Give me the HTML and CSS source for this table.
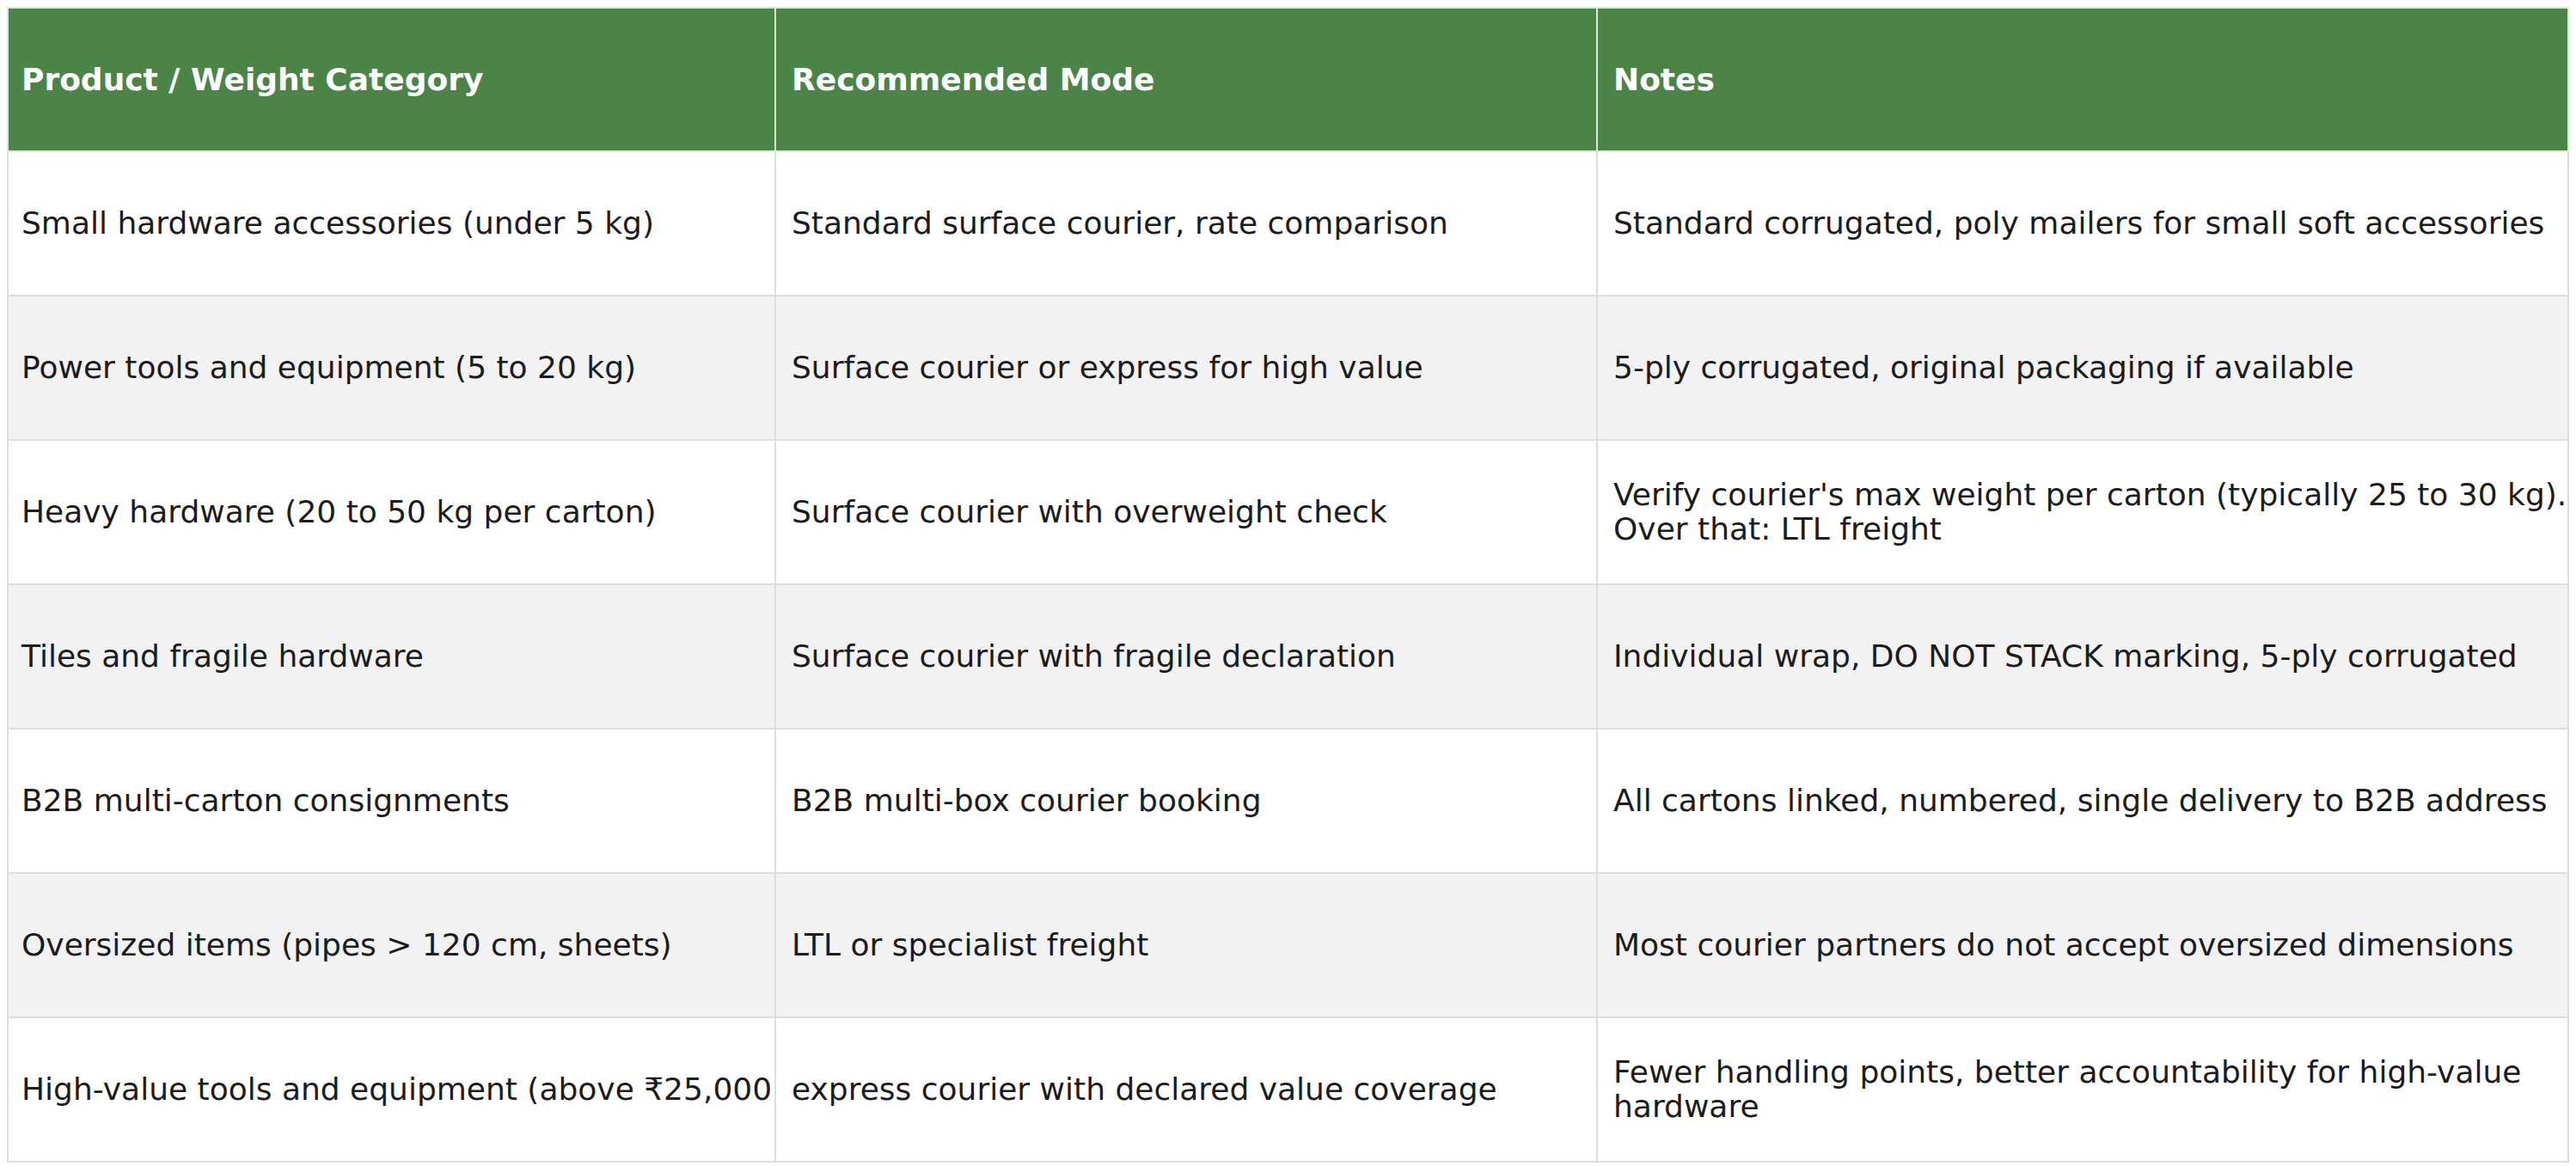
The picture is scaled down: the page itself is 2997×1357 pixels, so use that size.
FILE: index.html
```html
<!DOCTYPE html>
<html lang="en">
<head>
<meta charset="utf-8">
<title>Shipping modes by product category</title>
<link rel="stylesheet" href="styles.css">
</head>
<body>
<table class="modes">
  <colgroup>
    <col class="col-product">
    <col class="col-mode">
    <col class="col-notes">
  </colgroup>
  <thead>
    <tr class="head-row">
      <th>Product / Weight Category</th>
      <th>Recommended Mode</th>
      <th>Notes</th>
    </tr>
  </thead>
  <tbody>
    <tr>
      <td>Small hardware accessories (under 5 kg)</td>
      <td>Standard surface courier, rate comparison</td>
      <td>Standard corrugated, poly mailers for small soft accessories</td>
    </tr>
    <tr>
      <td>Power tools and equipment (5 to 20 kg)</td>
      <td>Surface courier or express for high value</td>
      <td>5-ply corrugated, original packaging if available</td>
    </tr>
    <tr>
      <td>Heavy hardware (20 to 50 kg per carton)</td>
      <td>Surface courier with overweight check</td>
      <td class="nowrap">Verify courier's max weight per carton (typically 25 to 30 kg).<br>Over that: LTL freight</td>
    </tr>
    <tr>
      <td>Tiles and fragile hardware</td>
      <td>Surface courier with fragile declaration</td>
      <td>Individual wrap, DO NOT STACK marking, 5-ply corrugated</td>
    </tr>
    <tr>
      <td>B2B multi-carton consignments</td>
      <td>B2B multi-box courier booking</td>
      <td>All cartons linked, numbered, single delivery to B2B address</td>
    </tr>
    <tr>
      <td>Oversized items (pipes &gt; 120 cm, sheets)</td>
      <td>LTL or specialist freight</td>
      <td>Most courier partners do not accept oversized dimensions</td>
    </tr>
    <tr>
      <td class="nowrap">High-value tools and equipment (above ₹25,000</td>
      <td>express courier with declared value coverage</td>
      <td>Fewer handling points, better accountability for high-value hardware</td>
    </tr>
  </tbody>
</table>
</body>
</html>
```
FILE: styles.css
```css
html, body {
  background: #ffffff;
}

body {
  margin: 8px;
  font-family: "DejaVu Sans", "Liberation Sans", sans-serif;
  color: #1c1c1c;
}

.modes {
  width: 100%;
  border-collapse: collapse;
  table-layout: fixed;
  font-size: 36px;
  line-height: 40px;
}

.col-product { width: 893px; }
.col-mode { width: 956px; }
.col-notes { width: auto; }

.modes th,
.modes td {
  border: 2px solid #dddddd;
  padding: 0 18px;
  text-align: left;
  vertical-align: middle;
}

.modes th:first-child,
.modes td:first-child {
  padding-left: 15px;
  padding-right: 0;
}

.head-row {
  height: 167px;
}

.modes th {
  background: #4a8446;
  color: #ffffff;
  font-weight: bold;
  border-color: #d9e6d8;
}

.modes tbody tr {
  height: 168px;
}

.modes tbody tr:nth-child(even) td {
  background: #f2f2f2;
}

.nowrap {
  white-space: nowrap;
}
```
